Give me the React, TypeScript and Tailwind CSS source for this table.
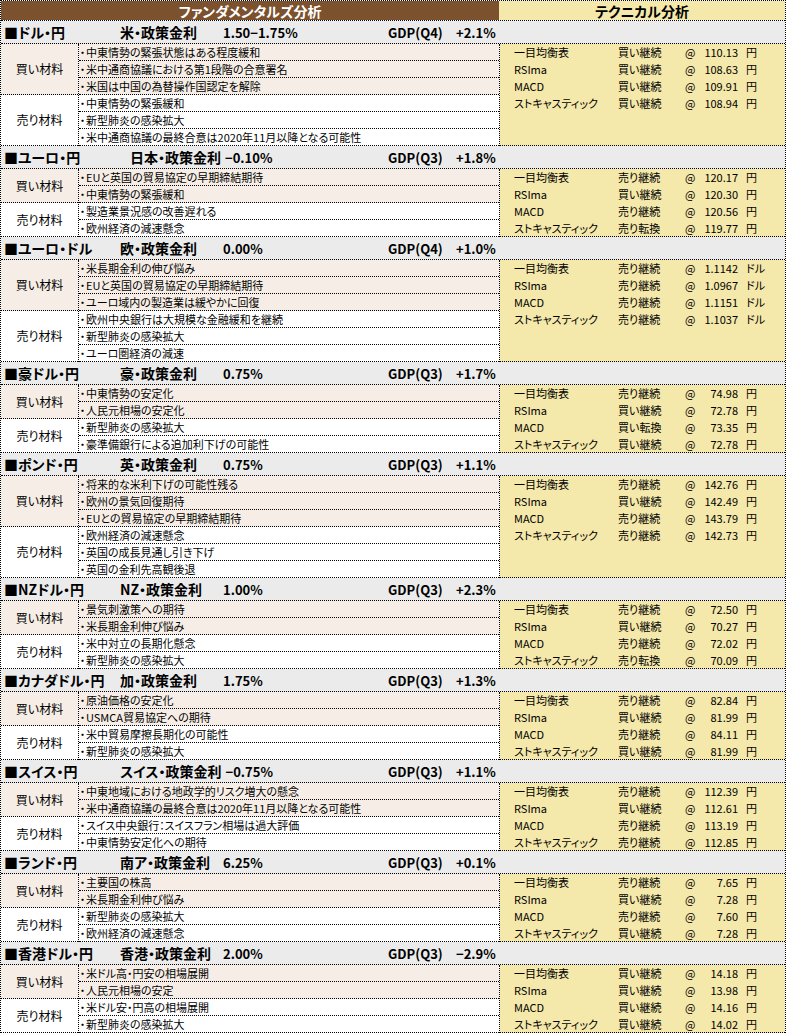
const techNames = ['一目均衡表', 'RSIma', 'MACD', 'ストキャスティック']

type Section = {
  pair: string
  label: string
  labelCls?: string
  rate: string
  gdpQ: string
  gdp: string
  buy: string[]
  sell: string[]
  signals: string[]
  values: string[]
  unit: string
}

const sections: Section[] = [
  {
    pair: '■ドル・円',
    label: '米・政策金利',
    rate: '1.50−1.75%',
    gdpQ: 'GDP(Q4)',
    gdp: '+2.1%',
    buy: ['中東情勢の緊張状態はある程度緩和', '米中通商協議における第1段階の合意署名', '米国は中国の為替操作国認定を解除'],
    sell: ['中東情勢の緊張緩和', '新型肺炎の感染拡大', '米中通商協議の最終合意は2020年11月以降となる可能性'],
    signals: ['買い継続', '買い継続', '買い継続', '買い継続'],
    values: ['110.13', '108.63', '109.91', '108.94'],
    unit: '円',
  },
  {
    pair: '■ユーロ・円',
    label: '日本・政策金利',
    labelCls: 'pl-[10px]',
    rate: '−0.10%',
    gdpQ: 'GDP(Q3)',
    gdp: '+1.8%',
    buy: ['EUと英国の貿易協定の早期締結期待', '中東情勢の緊張緩和'],
    sell: ['製造業景況感の改善遅れる', '欧州経済の減速懸念'],
    signals: ['売り継続', '買い継続', '売り継続', '売り転換'],
    values: ['120.17', '120.30', '120.56', '119.77'],
    unit: '円',
  },
  {
    pair: '■ユーロ・ドル',
    label: '欧・政策金利',
    rate: '0.00%',
    gdpQ: 'GDP(Q4)',
    gdp: '+1.0%',
    buy: ['米長期金利の伸び悩み', 'EUと英国の貿易協定の早期締結期待', 'ユーロ域内の製造業は緩やかに回復'],
    sell: ['欧州中央銀行は大規模な金融緩和を継続', '新型肺炎の感染拡大', 'ユーロ圏経済の減速'],
    signals: ['売り継続', '売り継続', '売り継続', '売り継続'],
    values: ['1.1142', '1.0967', '1.1151', '1.1037'],
    unit: 'ドル',
  },
  {
    pair: '■豪ドル・円',
    label: '豪・政策金利',
    rate: '0.75%',
    gdpQ: 'GDP(Q3)',
    gdp: '+1.7%',
    buy: ['中東情勢の安定化', '人民元相場の安定化'],
    sell: ['新型肺炎の感染拡大', '豪準備銀行による追加利下げの可能性'],
    signals: ['売り継続', '買い継続', '買い転換', '買い継続'],
    values: ['74.98', '72.78', '73.35', '72.78'],
    unit: '円',
  },
  {
    pair: '■ポンド・円',
    label: '英・政策金利',
    rate: '0.75%',
    gdpQ: 'GDP(Q3)',
    gdp: '+1.1%',
    buy: ['将来的な米利下げの可能性残る', '欧州の景気回復期待', 'EUとの貿易協定の早期締結期待'],
    sell: ['欧州経済の減速懸念', '英国の成長見通し引き下げ', '英国の金利先高観後退'],
    signals: ['売り継続', '買い継続', '売り継続', '売り継続'],
    values: ['142.76', '142.49', '143.79', '142.73'],
    unit: '円',
  },
  {
    pair: '■NZドル・円',
    label: 'NZ・政策金利',
    rate: '1.00%',
    gdpQ: 'GDP(Q3)',
    gdp: '+2.3%',
    buy: ['景気刺激策への期待', '米長期金利伸び悩み'],
    sell: ['米中対立の長期化懸念', '新型肺炎の感染拡大'],
    signals: ['売り継続', '買い継続', '売り継続', '売り転換'],
    values: ['72.50', '70.27', '72.02', '70.09'],
    unit: '円',
  },
  {
    pair: '■カナダドル・円',
    label: '加・政策金利',
    rate: '1.75%',
    gdpQ: 'GDP(Q3)',
    gdp: '+1.3%',
    buy: ['原油価格の安定化', 'USMCA貿易協定への期待'],
    sell: ['米中貿易摩擦長期化の可能性', '新型肺炎の感染拡大'],
    signals: ['売り継続', '買い継続', '売り継続', '買い継続'],
    values: ['82.84', '81.99', '84.11', '81.99'],
    unit: '円',
  },
  {
    pair: '■スイス・円',
    label: 'スイス・政策金利',
    rate: '−0.75%',
    gdpQ: 'GDP(Q3)',
    gdp: '+1.1%',
    buy: ['中東地域における地政学的リスク増大の懸念', '米中通商協議の最終合意は2020年11月以降となる可能性'],
    sell: ['スイス中央銀行：スイスフラン相場は過大評価', '中東情勢安定化への期待'],
    signals: ['売り継続', '買い継続', '売り継続', '売り継続'],
    values: ['112.39', '112.61', '113.19', '112.85'],
    unit: '円',
  },
  {
    pair: '■ランド・円',
    label: '南ア・政策金利',
    rate: '6.25%',
    gdpQ: 'GDP(Q3)',
    gdp: '+0.1%',
    buy: ['主要国の株高', '米長期金利伸び悩み'],
    sell: ['新型肺炎の感染拡大', '欧州経済の減速懸念'],
    signals: ['売り継続', '買い継続', '売り継続', '買い継続'],
    values: ['7.65', '7.28', '7.60', '7.28'],
    unit: '円',
  },
  {
    pair: '■香港ドル・円',
    label: '香港・政策金利',
    rate: '2.00%',
    gdpQ: 'GDP(Q3)',
    gdp: '−2.9%',
    buy: ['米ドル高・円安の相場展開', '人民元相場の安定'],
    sell: ['米ドル安・円高の相場展開', '新型肺炎の感染拡大'],
    signals: ['買い継続', '買い継続', '買い継続', '買い継続'],
    values: ['14.18', '13.98', '14.16', '14.02'],
    unit: '円',
  },
]

function ItemRows({ items, bg }: { items: string[]; bg: string }) {
  return (
    <>
      {items.map((t, i) => (
        <div key={i} className={`flex h-[17px] items-center border-b border-dotted border-black text-[11px] leading-none whitespace-nowrap ${bg}`}>
          <span className="w-[7px] text-center">・</span>
          <span>{t}</span>
        </div>
      ))}
    </>
  )
}

function SectionBlock({ s }: { s: Section }) {
  const rows = s.buy.length + s.sell.length
  return (
    <div>
      <div className="grid h-[23px] grid-cols-[119px_268px_68px_auto] items-center border-b border-dotted border-black bg-[#ebebeb] leading-none font-bold whitespace-nowrap">
        <span className="pl-[3px] text-[14px]">{s.pair}</span>
        <span className="flex items-center">
          <span className={`min-w-[103px] pr-[4px] text-[14px] ${s.labelCls ?? ''}`}>{s.label}</span>
          <span className="text-[13px]">{s.rate}</span>
        </span>
        <span className="text-[13px]">{s.gdpQ}</span>
        <span className="text-[13px]">{s.gdp}</span>
      </div>

      <div className="flex">
        <div className="flex w-[78px] flex-col border-r border-dotted border-black text-[12px]">
          <div
            className="flex items-center justify-center border-b border-dotted border-black bg-[#f6eee6]"
            style={{ height: s.buy.length * 17 }}
          >
            買い材料
          </div>
          <div
            className="flex items-center justify-center border-b border-dotted border-black bg-white"
            style={{ height: s.sell.length * 17 }}
          >
            売り材料
          </div>
        </div>

        <div className="flex w-[421px] flex-col border-r border-dotted border-black">
          <ItemRows items={s.buy} bg="bg-[#f6eee6]" />
          <ItemRows items={s.sell} bg="bg-white" />
        </div>

        <div className="flex-1 border-b border-dotted border-black bg-[#f4e8aa] pl-[14px]" style={{ height: rows * 17 }}>
          {techNames.map((name, i) => (
            <div key={name} className="grid h-[17px] grid-cols-[104px_67px_15px_38px_auto] items-center text-[11px] leading-none whitespace-nowrap">
              <span>{name}</span>
              <span>{s.signals[i]}</span>
              <span>@</span>
              <span className="text-right">{s.values[i]}</span>
              <span className="pl-[8px]">{s.unit}</span>
            </div>
          ))}
        </div>
      </div>
    </div>
  )
}

export default function App() {
  return (
    <div className="w-[786px] border-x border-t border-dotted border-black bg-white font-['Noto_Sans_CJK_JP','Noto_Sans',sans-serif] text-black [font-feature-settings:'palt']">
      <div className="flex h-[20px] border-b border-dotted border-black text-[14px] leading-none font-bold">
        <div className="flex w-[498px] items-center justify-center bg-[#7b512e] text-white">ファンダメンタルズ分析</div>
        <div className="flex flex-1 items-center justify-center bg-[#f4e8aa]">テクニカル分析</div>
      </div>
      {sections.map((s) => (
        <SectionBlock key={s.pair} s={s} />
      ))}
    </div>
  )
}
